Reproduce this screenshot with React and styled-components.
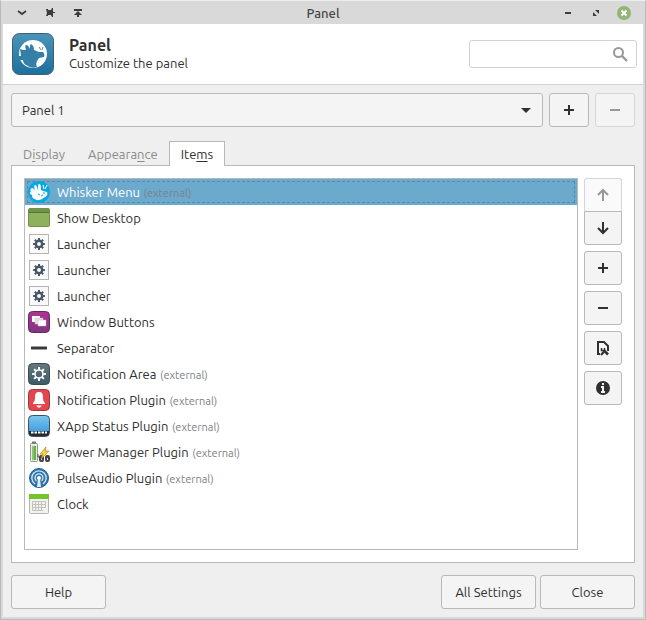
import React, { useState } from "react";
import styled, { createGlobalStyle, css } from "styled-components";

const GlobalStyle = createGlobalStyle`
  * { box-sizing: border-box; }
  body {
    margin: 0;
    background: #ededed;
    color: #303030;
    font: 13px/18px Ubuntu, "Noto Sans", sans-serif;
  }
  button, input, select { font: inherit; color: inherit; }
  svg { display: block; flex: none; }
`;

const Window = styled.main`
  min-height: 100vh;
  display: flex;
  flex-direction: column;
  background: #efefef;
  border: 1px solid #b9b9b9;
  border-top-color: #ededed;
  box-shadow: inset 2px 0 #d9d9d9, inset -2px 0 #d9d9d9, inset 0 -2px #d9d9d9;
  padding: 0 2px 2px;
`;

const TitleBar = styled.header`
  height: 23px;
  margin: 0 -2px;
  padding: 0 13px;
  display: grid;
  grid-template-columns: 1fr auto 1fr;
  align-items: center;
  background: #d9d9d9;
`;

const WindowTitle = styled.h1`
  margin: 0;
  font-size: 13px;
  line-height: 22px;
  font-weight: 500;
  color: #454545;
`;

const WindowControls = styled.div`
  display: flex;
  gap: 12px;
  justify-content: ${(p) => (p.$end ? "flex-end" : "flex-start")};
`;

const WindowButton = styled.button`
  width: 16px;
  height: 16px;
  padding: 0;
  border: 0;
  background: none;
  color: #3c3c3c;
`;

const Banner = styled.section`
  height: 61px;
  display: flex;
  align-items: center;
  padding: 0 6px 0 8px;
  background: #fff;
  border-bottom: 1px solid #d2d2d2;
`;

const BannerText = styled.div`
  flex: 1;
  margin-left: 14px;
  padding-bottom: 2px;
`;

const BannerTitle = styled.h2`
  margin: 0;
  font-size: 16px;
  line-height: 20px;
  font-weight: 700;
`;

const BannerSubtitle = styled.p`
  margin: 0;
  line-height: 16px;
`;

const SearchBox = styled.label`
  width: 168px;
  height: 28px;
  display: flex;
  align-items: center;
  padding: 0 8px;
  background: #fff;
  border: 1px solid #d2d2d2;
  border-radius: 3px;
  color: #989898;
`;

const SearchInput = styled.input`
  flex: 1;
  min-width: 0;
  border: 0;
  outline: 0;
  padding: 0;
  background: none;
`;

const Content = styled.div`
  flex: 1;
  display: flex;
  flex-direction: column;
  padding: 8px;
`;

const PanelRow = styled.div`
  display: flex;
  gap: 6px;
`;

const SelectWrap = styled.div`
  flex: 1;
  display: grid;
  align-items: center;
  & > * { grid-area: 1 / 1; }
  & > svg { justify-self: end; margin-right: 12px; pointer-events: none; }
`;

const PanelSelect = styled.select`
  appearance: none;
  width: 100%;
  height: 34px;
  padding: 0 32px 0 10px;
  background: #f4f4f4;
  border: 1px solid #b9b9b9;
  border-radius: 3px;
`;

const Button = styled.button`
  height: 34px;
  width: ${(p) => p.$width};
  display: flex;
  align-items: center;
  justify-content: center;
  padding: 0;
  background: #f4f4f4;
  border: 1px solid #b9b9b9;
  border-radius: 3px;
  &:disabled { color: #989898; border-color: #d6d6d6; }
`;

const Tabs = styled.div`
  display: flex;
  margin-top: 14px;
  margin-bottom: -1px;
`;

const Tab = styled.button`
  height: 25px;
  padding: 0 11px;
  border: 1px solid transparent;
  border-bottom: 0;
  background: none;
  color: #8b8b8b;
  & + & { margin-left: -1px; }
  & u { text-underline-offset: 2px; }
  ${(p) =>
    p.$active &&
    css`
      color: #303030;
      background: #fff;
      border-color: #b9b9b9;
      z-index: 1;
    `}
`;

const TabPanel = styled.section`
  flex: 1;
  display: flex;
  gap: 6px;
  padding: 12px;
  background: #fff;
  border: 1px solid #b9b9b9;
`;

const ItemList = styled.ul`
  flex: 1;
  margin: 0;
  padding: 0;
  list-style: none;
  border: 1px solid #b9b9b9;
`;

const Item = styled.li`
  height: 26px;
  display: flex;
  align-items: center;
  gap: 7px;
  padding-left: 3px;
  cursor: default;
  ${(p) =>
    p.$selected &&
    css`
      color: #fff;
      background: #6ba9cd;
      outline: 1px dashed #558dae;
      outline-offset: -3px;
    `}
`;

const External = styled.small`
  margin-left: 1px;
  font-size: 11px;
  color: #7c8288;
`;

const Actions = styled.div`
  display: flex;
  flex-direction: column;
  gap: 6px;
`;

const MoveGroup = styled.div`
  display: flex;
  flex-direction: column;
  & > :first-child { height: 33px; border-bottom: 0; border-radius: 3px 3px 0 0; background: #fafafa; }
  & > :last-child { border-radius: 0 0 3px 3px; }
`;

const Footer = styled.footer`
  display: flex;
  gap: 4px;
  margin-top: 12px;
`;

const Spacer = styled.div`
  flex: 1;
`;

const Glyph = ({ children }) => (
  <svg width="16" height="16" viewBox="0 0 16 16" fill="none" stroke="currentColor" strokeWidth="2" aria-hidden="true">
    {children}
  </svg>
);

const Plus = () => <Glyph><path d="M8 3v10M3 8h10" /></Glyph>;
const Minus = () => <Glyph><path d="M3 8h10" /></Glyph>;
const ArrowUp = () => <Glyph><path d="M8 14V3M3 8l5-5 5 5" /></Glyph>;
const ArrowDown = () => <Glyph><path d="M8 2v11M3 8l5 5 5-5" /></Glyph>;
const Properties = () => (
  <Glyph>
    <path d="M5 14H3V2h6l4 4v5" />
    <path d="M6 15l3.500-4" />
    <path d="M9 10.500l4 4" strokeWidth="2.500" />
    <path d="M6.500 8v2.500h3V8" strokeWidth="1.500" />
  </Glyph>
);
const Info = () => (
  <Glyph>
    <circle cx="8" cy="8" r="7" fill="currentColor" stroke="none" />
    <path d="M8 3v2M6 7h2v5M6 12h4" stroke="#f4f4f4" />
  </Glyph>
);

const MouseLogo = () => (
  <svg width="44" height="44" viewBox="0 0 44 44" aria-hidden="true">
    <defs>
      <linearGradient id="logo" x1="0" y1="0" x2="0" y2="1">
        <stop stopColor="#4a94b9" /><stop offset="1" stopColor="#1c709d" />
      </linearGradient>
    </defs>
    <rect x="1.500" y="1.500" width="41" height="41" rx="7" fill="url(#logo)" stroke="#40606f" />
    <circle cx="22" cy="22" r="14" fill="#fff" />
    <path d="M9 17l3 1 3 0c-1-3-1-5 0-5 2 0 3 2 4 4 0-3 0-5 1-5 2 1 3 3 3 6l5 2 4 0c1 1 2 3 1 5l-5 1-2 3c-1 2-1 4 0 6-3 1-7 1-9-1-3-1-5-3-5-6l-4 0-1-4 3 0z" fill="#347fa8" />
    <path d="M28 15l2 3M32 15l-1 3M26 21h1" stroke="#5799bd" />
  </svg>
);

const Frame = ({ children }) => (
  <svg width="22" height="22" viewBox="0 0 22 22" aria-hidden="true">{children}</svg>
);

const teeth = [0, 45, 90, 135, 180, 225, 270, 315];

const Cog = ({ color, radius, thick, tooth }) => (
  <g transform="translate(11 11)">
    <circle r={radius} fill="none" stroke={color} strokeWidth={thick} />
    {teeth.map((a) => (
      <path key={a} d={`M0 ${-radius - thick / 2 + 0.5}v${-tooth}`} stroke={color} strokeWidth="2" transform={`rotate(${a})`} />
    ))}
  </g>
);

const icons = {
  whisker: (
    <Frame>
      <circle cx="11" cy="11" r="11" fill="#08a9df" />
      <path d="M4 7c1 0 2 1 3 3-1-3-1-6 0-6 2 0 2 3 3 5 0-3 0-6 1-6 2 0 2 3 2 6l2 1 4 1c1 2 0 4-2 5l-3 2c-2 1-5 2-7 0-2 0-3-2-3-4l-2-1 0-2 1 0c-1-2-1-3 1-4z" fill="#fff" />
      <path d="M15 4l1 4M19 4l-2 4" stroke="#fff" />
      <path d="M10 13l2 1M15 12l2 0M13 15l2-1" stroke="#08a9df" />
    </Frame>
  ),
  desktop: (
    <Frame>
      <rect x=".5" y="1.500" width="21" height="18" rx="1" fill="#8eb15d" stroke="#729149" />
      <path d="M1 2h20v4H1z" fill="#729149" /><path d="M1 5.500h20" stroke="#56733a" />
    </Frame>
  ),
  launcher: (
    <Frame>
      <rect x="1.500" y="1.500" width="19" height="19" fill="#fafafa" stroke="#b5b5b5" />
      <Cog color="#465665" radius={3.2} thick={2.4} tooth={2} />
    </Frame>
  ),
  windows: (
    <Frame>
      <defs><linearGradient id="purple" x1="0" y1="0" x2="0" y2="1"><stop stopColor="#b23294" /><stop offset="1" stopColor="#803481" /></linearGradient></defs>
      <rect x=".5" y=".5" width="21" height="21" rx="4" fill="url(#purple)" stroke="#5b2e5d" />
      <path d="M4 5h8v6H4z" fill="#fff" /><path d="M7 7h8v6H7z" fill="#e7e1e7" stroke="#c9b4c9" strokeWidth=".5" /><path d="M10 9h8v6h-8z" fill="#fff" stroke="#c9b4c9" strokeWidth=".5" />
    </Frame>
  ),
  separator: <Frame><path d="M3 11h16" stroke="#3a3a3a" strokeWidth="3" /></Frame>,
  area: (
    <Frame>
      <defs><linearGradient id="slate" x1="0" y1="0" x2="0" y2="1"><stop stopColor="#66787e" /><stop offset="1" stopColor="#3c5b67" /></linearGradient></defs>
      <rect x=".5" y=".5" width="21" height="21" rx="4" fill="url(#slate)" stroke="#40494f" />
      <Cog color="#fff" radius={4} thick={1.6} tooth={2.6} />
    </Frame>
  ),
  bell: (
    <Frame>
      <rect x=".5" y=".5" width="21" height="21" rx="4" fill="#e7444e" stroke="#8d3e42" />
      <path d="M11 3c3 0 4 2 4 5 0 4 1 5 2 6v1H5v-1c1-1 2-2 2-6 0-3 1-5 4-5z" fill="#fff" /><path d="M8 16.500h6l-2 2h-2z" fill="#fff" />
    </Frame>
  ),
  status: (
    <Frame>
      <defs><linearGradient id="sky" x1="0" y1="0" x2="0" y2="1"><stop stopColor="#7bc7ef" /><stop offset="1" stopColor="#3290dd" /></linearGradient></defs>
      <rect x=".5" y=".5" width="21" height="21" rx="4" fill="url(#sky)" stroke="#3d5363" />
      <path d="M1 16h20v2q0 3-3 3H4q-3 0-3-3z" fill="#262b30" />
      <path d="M3 17.500h16" stroke="#fff" strokeWidth="2" strokeDasharray="2.500 1" />
    </Frame>
  ),
  power: (
    <Frame>
      <rect x="2.500" y="2.500" width="7" height="18" rx="1" fill="#e7eee4" stroke="#929991" />
      <path d="M4 1.500h4" stroke="#777" strokeWidth="2" /><path d="M4 5h4v14H4z" fill="#69ae4a" /><path d="M5 5v14" stroke="#b0dda0" />
      <path d="M10 13v3h3" fill="none" stroke="#555" />
      <rect x="11" y="14" width="5" height="7" rx="2" fill="#454545" /><rect x="17" y="14" width="5" height="7" rx="2" fill="#454545" />
      <path d="M13.500 17v2M19.500 17v2" stroke="#ddd" />
      <path d="M18 6l-6 7h3l-2 5 8-8h-4z" fill="#f6d347" stroke="#b8851c" strokeWidth=".7" />
    </Frame>
  ),
  audio: (
    <Frame>
      <circle cx="11" cy="11" r="9.500" fill="#2c74ad" stroke="#225f91" />
      <path d="M7 17a7.200 7.200 0 1 1 8 0M8.500 14a4 4 0 1 1 5 0" fill="none" stroke="#d3e5f2" strokeWidth="1.300" />
      <circle cx="11" cy="11" r="2" fill="#fff" /><path d="M10 12h2l1 8H9z" fill="#e4edf4" />
    </Frame>
  ),
  clock: (
    <Frame>
      <rect x="1.500" y="1.500" width="19" height="19" rx="1" fill="#f2f2ee" stroke="#b4b5b0" />
      <path d="M1 1h20v5H1z" fill="#74c52c" />
      <path d="M4 8.500h14M4 11.500h14M4 14.500h14M4 17.500h11M4.500 8v10M7.500 8v10M10.500 8v10M13.500 8v10M17.500 8v7" stroke="#c2c3bf" />
    </Frame>
  ),
};

const items = [
  ["whisker", "Whisker Menu", true],
  ["desktop", "Show Desktop"],
  ["launcher", "Launcher"],
  ["launcher", "Launcher"],
  ["launcher", "Launcher"],
  ["windows", "Window Buttons"],
  ["separator", "Separator"],
  ["area", "Notification Area", true],
  ["bell", "Notification Plugin", true],
  ["status", "XApp Status Plugin", true],
  ["power", "Power Manager Plugin", true],
  ["audio", "PulseAudio Plugin", true],
  ["clock", "Clock"],
];

export default function App() {
  const [selected, setSelected] = useState(0);
  return (
    <>
      <GlobalStyle />
      <Window>
        <TitleBar>
          <WindowControls>
            <WindowButton aria-label="Window menu"><Glyph><path d="M4 6l4 3 4-3" strokeWidth="1.800" /></Glyph></WindowButton>
            <WindowButton aria-label="Keep on all workspaces"><Glyph><path d="M4 4h2v1h3l1-2h1v4h2v1h-2v4h-1l-1-2H6v1H4l1-3z" fill="currentColor" stroke="none" /></Glyph></WindowButton>
            <WindowButton aria-label="Roll up"><Glyph><path d="M4 4h8v2H4zM8 6l4 4H9v2H7v-2H4z" fill="currentColor" stroke="none" /></Glyph></WindowButton>
          </WindowControls>
          <WindowTitle>Panel</WindowTitle>
          <WindowControls $end>
            <WindowButton aria-label="Minimize"><Glyph><path d="M5 8h6" /></Glyph></WindowButton>
            <WindowButton aria-label="Maximize"><Glyph><path d="M7 5h4v4zM5 7v4h4z" fill="currentColor" stroke="none" /></Glyph></WindowButton>
            <WindowButton aria-label="Close window"><Glyph><circle cx="8" cy="8" r="7" fill="#91b573" stroke="none" /><path d="M5.500 5.500l5 5M10.500 5.500l-5 5" stroke="#fff" /></Glyph></WindowButton>
          </WindowControls>
        </TitleBar>

        <Banner>
          <MouseLogo />
          <BannerText>
            <BannerTitle>Panel</BannerTitle>
            <BannerSubtitle>Customize the panel</BannerSubtitle>
          </BannerText>
          <SearchBox>
            <SearchInput type="search" aria-label="Search" />
            <Glyph><circle cx="6.500" cy="6.500" r="4.500" /><path d="M10 10l5 5" strokeWidth="2.400" /></Glyph>
          </SearchBox>
        </Banner>

        <Content>
          <PanelRow>
            <SelectWrap>
              <PanelSelect aria-label="Panel"><option>Panel 1</option></PanelSelect>
              <svg width="10" height="5" viewBox="0 0 10 5" aria-hidden="true"><path d="M0 0h10L5 5z" fill="#303030" /></svg>
            </SelectWrap>
            <Button $width="40px" aria-label="Add panel"><Plus /></Button>
            <Button $width="40px" aria-label="Remove panel" disabled><Minus /></Button>
          </PanelRow>

          <Tabs role="tablist">
            <Tab role="tab" aria-selected="false">D<u>i</u>splay</Tab>
            <Tab role="tab" aria-selected="false">Appeara<u>n</u>ce</Tab>
            <Tab role="tab" aria-selected="true" id="items-tab" $active>Ite<u>m</u>s</Tab>
          </Tabs>

          <TabPanel role="tabpanel" aria-labelledby="items-tab">
            <ItemList role="listbox" aria-label="Panel items">
              {items.map(([icon, name, external], i) => (
                <Item key={i} role="option" aria-selected={i === selected} $selected={i === selected} onClick={() => setSelected(i)}>
                  {icons[icon]}
                  <span>{name}{external && <External> (external)</External>}</span>
                </Item>
              ))}
            </ItemList>
            <Actions>
              <MoveGroup>
                <Button $width="38px" aria-label="Move up" disabled><ArrowUp /></Button>
                <Button $width="38px" aria-label="Move down"><ArrowDown /></Button>
              </MoveGroup>
              <Button $width="38px" aria-label="Add item"><Plus /></Button>
              <Button $width="38px" aria-label="Remove item"><Minus /></Button>
              <Button $width="38px" aria-label="Item properties"><Properties /></Button>
              <Button $width="38px" aria-label="About item"><Info /></Button>
            </Actions>
          </TabPanel>

          <Footer>
            <Button $width="95px">Help</Button>
            <Spacer />
            <Button $width="95px">All Settings</Button>
            <Button $width="95px">Close</Button>
          </Footer>
        </Content>
      </Window>
    </>
  );
}
